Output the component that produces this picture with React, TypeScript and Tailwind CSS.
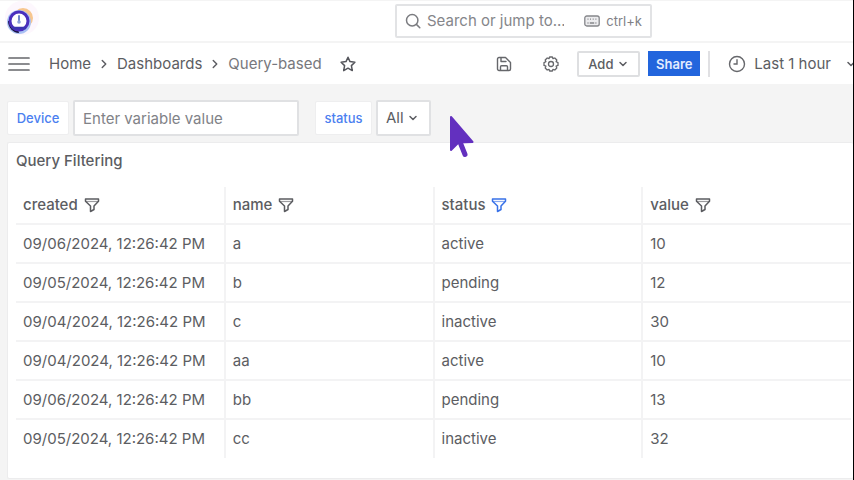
import React from "react";
import { ChevronDown, ChevronRight } from "lucide-react";

type Row = { created: string; name: string; status: string; value: number };

const rows: Row[] = [
  { created: "09/06/2024, 12:26:42 PM", name: "a", status: "active", value: 10 },
  { created: "09/05/2024, 12:26:42 PM", name: "b", status: "pending", value: 12 },
  { created: "09/04/2024, 12:26:42 PM", name: "c", status: "inactive", value: 30 },
  { created: "09/04/2024, 12:26:42 PM", name: "aa", status: "active", value: 10 },
  { created: "09/06/2024, 12:26:42 PM", name: "bb", status: "pending", value: 13 },
  { created: "09/05/2024, 12:26:42 PM", name: "cc", status: "inactive", value: 32 },
];

const columns: (keyof Row)[] = ["created", "name", "status", "value"];

function Logo() {
  return (
    <svg viewBox="0 0 40 40" className="size-10" aria-hidden="true">
      <circle cx="22" cy="17" r="17" fill="#fdf7fd" />
      <circle cx="23" cy="17" r="10" fill="#f7c690" />
      <circle cx="19" cy="21" r="12" fill="#a9c1f3" />
      <path d="M8 20a12 12 0 0 0 11 12l-1-4-9-8z" fill="#17123f" />
      <circle cx="19" cy="20" r="9" fill="#fff" stroke="#4a2fbd" strokeWidth="3" />
      <path d="M12 27h14" stroke="#3b35b0" strokeWidth="2.5" />
      <path d="M19 15v6" stroke="#6f86c9" strokeWidth="2" strokeLinecap="round" />
      <circle cx="19" cy="21" r="1.8" fill="#8ea3dc" />
    </svg>
  );
}

function SearchIcon() {
  return (
    <svg viewBox="0 0 16 16" className="size-4 shrink-0" fill="none" stroke="#7b7c80" strokeWidth="1.5" strokeLinecap="round" aria-hidden="true">
      <circle cx="7.2" cy="7.2" r="5.7" />
      <path d="m11.4 11.4 3.4 3.4" />
    </svg>
  );
}

function KeyboardIcon() {
  return (
    <svg viewBox="0 0 16 12" className="h-3 w-4 shrink-0" fill="none" stroke="#85868a" strokeWidth="1.3" aria-hidden="true">
      <rect x="0.8" y="1" width="14.4" height="10" rx="2" fill="#ececee" />
      <path d="M3.5 4.2h1M6 4.2h1M8.7 4.2h1M11.4 4.2h1M3.5 8h1M5.8 8h4.4M11.4 8h1" />
    </svg>
  );
}

function MenuIcon() {
  return (
    <svg viewBox="0 0 22 16" className="h-4 w-[22px]" stroke="#66676b" strokeWidth="1.7" strokeLinecap="round" aria-hidden="true">
      <path d="M1 2h20M1 8h20M1 14h20" />
    </svg>
  );
}

function StarIcon() {
  return (
    <svg viewBox="0 0 16 16" className="size-4" fill="none" stroke="#55565c" strokeWidth="1.5" strokeLinejoin="round" aria-hidden="true">
      <path d="m8 1.2 2 4.4 4.9.6-3.5 3.4.9 5L8 12.200l-4.300 2.400.9-5L1.100 6.200 6 5.600z" />
    </svg>
  );
}

function SaveIcon() {
  return (
    <svg viewBox="0 0 16 16" className="size-4" fill="none" stroke="#66676b" strokeWidth="1.4" strokeLinejoin="round" strokeLinecap="round" aria-hidden="true">
      <path d="M3 1.500h6.500l5 5V13A1.500 1.500 0 0 1 13 14.500H3A1.500 1.500 0 0 1 1.500 13V3A1.500 1.500 0 0 1 3 1.500z" />
      <path d="M5 1.800V5.500h5M4.500 14.200v-3.400a1 1 0 0 1 1-1h5a1 1 0 0 1 1 1v3.400" />
    </svg>
  );
}

function GearIcon() {
  return (
    <svg viewBox="0 0 16 16" className="size-4" fill="none" stroke="#66676b" strokeWidth="1.3" strokeLinejoin="round" aria-hidden="true">
      <path d="M6.600 1h2.800l.6 1.700 1.800-.7 2 2-.7 1.700 1.900.9v2.800l-1.900.7.7 1.900-2 2-1.800-.7-.6 1.700H6.600L6 13.300l-1.800.7-2-2 .7-1.900L1 9.400V6.600l1.900-.9L2.200 4l2-2 1.800.7z" />
      <circle cx="8" cy="8" r="2.500" />
    </svg>
  );
}

function ClockIcon() {
  return (
    <svg viewBox="0 0 18 18" className="size-[18px] shrink-0" fill="none" stroke="#66676b" strokeWidth="1.4" strokeLinecap="round" aria-hidden="true">
      <circle cx="9" cy="9" r="7.500" />
      <path d="M9 4.800V9H6" />
    </svg>
  );
}

function FilterIcon({ active }: { active: boolean }) {
  return (
    <svg
      viewBox="0 0 16 16"
      className={active ? "size-4 text-[#3871e8]" : "size-4 text-[#5b5c60]"}
      fill="none"
      stroke="currentColor"
      strokeWidth="1.5"
      strokeLinejoin="round"
      aria-hidden="true"
    >
      <path d="M1.500 2h13v2.200L10 9v3.500L6.500 14.500V9L1.500 4.200z" />
      <path d="M1.800 4.500h12.400" strokeWidth="1.200" opacity="0.600" />
    </svg>
  );
}

function Pointer() {
  return (
    <svg viewBox="0 0 26 44" className="pointer-events-none absolute top-[115px] left-[449px] h-11 w-[26px]" aria-hidden="true">
      <path d="M2 2v34l7-7 24 0" fill="none" />
      <path d="M2 2v33l7.500-7.500L23.500 27z" fill="#6330bf" stroke="#6330bf" strokeWidth="2" strokeLinejoin="round" />
      <path d="m11 27 5 12.500" stroke="#6330bf" strokeWidth="5" strokeLinecap="round" />
    </svg>
  );
}

export default function App() {
  return (
    <div className="relative min-h-screen overflow-hidden border-r border-black bg-[#f4f4f4] font-['Inter','Liberation_Sans',sans-serif] text-[15px] leading-5 text-[#5c5d62]">
      <header className="flex h-[41px] items-center border-t border-[#f4f4f4] bg-white">
        <div className="flex-1">
          <Logo />
        </div>
        <label className="flex h-[34px] w-[257px] items-center gap-1.5 rounded-xs border-2 border-[#e2e3e5] bg-white px-2">
          <SearchIcon />
          <input
            type="search"
            aria-label="Search"
            placeholder="Search or jump to..."
            className="min-w-0 flex-1 outline-none placeholder:text-[#85868a]"
          />
          <KeyboardIcon />
          <kbd className="font-[Inter] text-[13px] text-[#808186]">ctrl+k</kbd>
        </label>
        <div className="w-[201px] shrink" />
      </header>

      <div className="mt-0.5 flex h-[41px] items-center overflow-hidden bg-white pl-2">
        <button type="button" aria-label="Menu" className="mr-[19px]">
          <MenuIcon />
        </button>
        <nav aria-label="Breadcrumb" className="flex flex-1 items-center gap-1.5">
          <a href="#home">Home</a>
          <ChevronRight className="size-3.5 shrink-0" strokeWidth={2.5} />
          <a href="#dashboards">Dashboards</a>
          <ChevronRight className="size-3.5 shrink-0" strokeWidth={2.5} />
          <span className="whitespace-nowrap text-[#77787d]">Query-based</span>
          <button type="button" aria-label="Mark as favorite" className="ml-3">
            <StarIcon />
          </button>
        </nav>
        <div className="flex shrink-0 items-center">
          <button type="button" aria-label="Save dashboard">
            <SaveIcon />
          </button>
          <button type="button" aria-label="Dashboard settings" className="mx-[31px] mr-[18px]">
            <GearIcon />
          </button>
          <button type="button" className="flex h-[26px] w-[63px] items-center justify-center gap-1 rounded-xs border-2 border-[#dedfe1] text-[13px] font-medium">
            Add
            <ChevronDown className="size-3" strokeWidth={3} />
          </button>
          <button type="button" className="ml-2 h-[25px] w-[52px] bg-[#2265dd] text-[13px] font-semibold text-[#e4edff]">
            Share
          </button>
          <div className="ml-2 h-[26px] w-0.5 bg-[#e0e0e3]" />
          <button type="button" className="-mr-1 ml-[18px] flex items-center gap-2 whitespace-nowrap">
            <ClockIcon />
            <span className="mr-1.5">Last 1 hour</span>
            <ChevronDown className="size-3" strokeWidth={3} />
          </button>
        </div>
      </div>

      <main className="pt-4 pl-[7px]">
        <form className="flex items-center gap-1">
          <label htmlFor="device" className="flex h-[34px] w-[62px] items-center justify-center rounded-xs border border-[#eeeeef] bg-white text-[13px] font-medium text-[#4c7ff0]">
            Device
          </label>
          <input
            id="device"
            type="text"
            placeholder="Enter variable value"
            className="mr-3 h-9 w-[226px] rounded-xs border-2 border-[#e0e1e3] bg-white px-2 outline-none placeholder:text-[#818287]"
          />
          <label htmlFor="status" className="flex h-[34px] w-[57px] items-center justify-center rounded-xs border border-[#eeeeef] bg-white text-[13px] font-medium text-[#4c7ff0]">
            status
          </label>
          <div className="grid h-9 w-[55px] items-center rounded-xs border-2 border-[#e0e1e3] bg-white">
            <select id="status" className="col-start-1 row-start-1 w-full appearance-none bg-transparent pl-2 outline-none">
              <option>All</option>
            </select>
            <ChevronDown className="pointer-events-none col-start-1 row-start-1 mr-2.5 size-3 justify-self-end" strokeWidth={3} />
          </div>
        </form>

        <section className="mt-1.5 min-h-[337px] rounded-xs border border-r-0 border-[#ececed] bg-white pr-0.5 pl-2">
          <h2 className="py-2 text-[15px] font-medium">Query Filtering</h2>
          <table className="mt-2 w-full table-fixed border-collapse">
            <thead>
              <tr className="h-[37px] border-b-2 border-[#f3f3f4]">
                {columns.map((column) => (
                  <th key={column} scope="col" className="border-r-2 border-[#f3f3f4] pl-[7px] text-left font-medium last:border-r-0">
                    <span className="flex items-center gap-1.5">
                      {column}
                      <button type="button" aria-label={`Filter by ${column}`}>
                        <FilterIcon active={column === "status"} />
                      </button>
                    </span>
                  </th>
                ))}
              </tr>
            </thead>
            <tbody>
              {rows.map((row, index) => (
                <tr key={index} className="h-[39px] border-b-2 border-[#f3f3f4] last:border-b-0">
                  {columns.map((column) => (
                    <td key={column} className="border-r-2 border-[#f3f3f4] pl-[7px] whitespace-nowrap last:border-r-0">
                      {row[column]}
                    </td>
                  ))}
                </tr>
              ))}
            </tbody>
          </table>
        </section>
      </main>
      <Pointer />
    </div>
  );
}
